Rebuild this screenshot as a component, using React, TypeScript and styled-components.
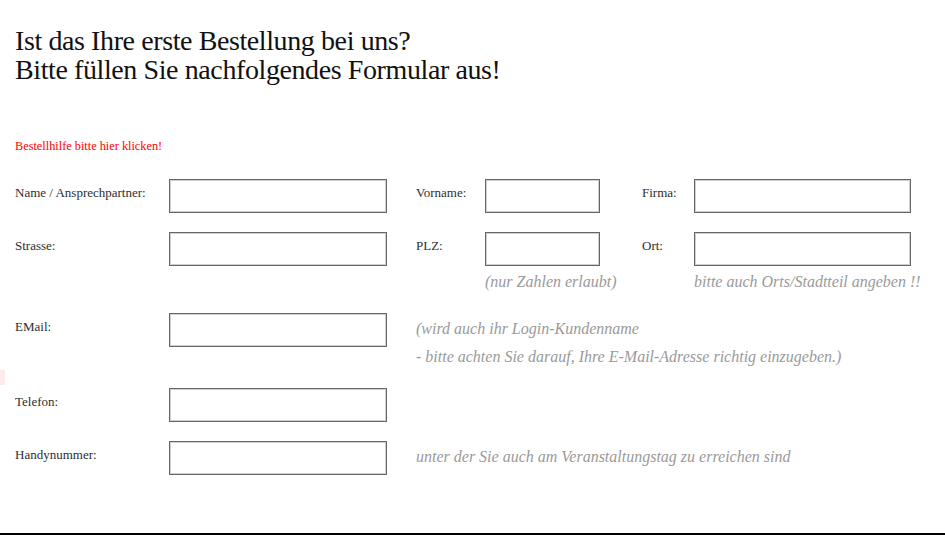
import React from "react";
import styled, { createGlobalStyle } from "styled-components";

const GlobalStyle = createGlobalStyle`
  html, body {
    margin: 0;
    padding: 0;
    background: #ffffff;
  }
  body {
    font-family: "Liberation Serif", "Times New Roman", serif;
    overflow: hidden;
  }
  * { box-sizing: border-box; }
`;

const Page = styled.div`
  position: relative;
  width: 945px;
  height: 535px;
  padding: 26px 15px 0 15px;
  border-bottom: 2px solid #000;
  overflow: hidden;
`;

const EdgeMark = styled.div`
  position: absolute;
  left: 0;
  top: 370px;
  width: 5px;
  height: 15px;
  background: #fdeaea;
`;

const Heading = styled.h1`
  margin: 0;
  font-family: "Liberation Serif", "Times New Roman", serif;
  font-weight: normal;
  font-size: 28px;
  line-height: 29px;
  letter-spacing: -0.4px;
  color: #111;
`;

const HelpLink = styled.a`
  display: block;
  margin-top: 55px;
  font-size: 12.3px;
  line-height: 14px;
  color: #ff0000;
  text-decoration: none;
  cursor: pointer;
`;

const Row = styled.div<{ $mt: number }>`
  display: grid;
  grid-template-columns: 154px 218px 29px 69px 115px 42px 52px 217px;
  align-items: start;
  margin-top: ${(p) => p.$mt}px;
`;

const Label = styled.label<{ $col: number }>`
  grid-column: ${(p) => p.$col};
  grid-row: 1;
  padding-top: 6px;
  font-size: 13px;
  line-height: 16px;
  color: #2e2e2e;
  white-space: nowrap;
`;

const Field = styled.input<{ $col: number }>`
  grid-column: ${(p) => p.$col};
  grid-row: 1;
  display: block;
  width: 100%;
  height: 34px;
  margin: 0;
  padding: 2px 4px;
  border: 1px solid #666;
  box-shadow: inset 0 0 0 1px #cfcfcf;
  background: #fff;
  font-family: "Liberation Serif", serif;
  font-size: 13px;
  outline: none;
`;

const Hint = styled.div<{ $col: number; $span?: number }>`
  grid-column: ${(p) => p.$col} / span ${(p) => p.$span ?? 1};
  grid-row: 1;
  padding-top: 2px;
  font-style: italic;
  font-size: 16px;
  line-height: 28px;
  color: #9a9a9a;
  white-space: nowrap;
`;

export default function App() {
  return (
    <>
      <GlobalStyle />
      <Page>
        <EdgeMark />
        <Heading>
          Ist das Ihre erste Bestellung bei uns?
          <br />
          Bitte füllen Sie nachfolgendes Formular aus!
        </Heading>
        <HelpLink>Bestellhilfe bitte hier klicken!</HelpLink>

        <Row $mt={26}>
          <Label $col={1}>Name / Ansprechpartner:</Label>
          <Field $col={2} />
          <Label $col={4}>Vorname:</Label>
          <Field $col={5} />
          <Label $col={7}>Firma:</Label>
          <Field $col={8} />
        </Row>

        <Row $mt={19}>
          <Label $col={1}>Strasse:</Label>
          <Field $col={2} />
          <Label $col={4}>PLZ:</Label>
          <Field $col={5} />
          <Label $col={7}>Ort:</Label>
          <Field $col={8} />
        </Row>

        <Row $mt={0}>
          <Hint $col={5} $span={2}>(nur Zahlen erlaubt)</Hint>
          <Hint $col={8}>bitte auch Orts/Stadtteil angeben !!</Hint>
        </Row>

        <Row $mt={17}>
          <Label $col={1}>EMail:</Label>
          <Field $col={2} />
          <Hint $col={4} $span={5}>
            (wird auch ihr Login-Kundenname
            <br />- bitte achten Sie darauf, Ihre E-Mail-Adresse richtig einzugeben.)
          </Hint>
        </Row>

        <Row $mt={17}>
          <Label $col={1}>Telefon:</Label>
          <Field $col={2} />
        </Row>

        <Row $mt={19}>
          <Label $col={1}>Handynummer:</Label>
          <Field $col={2} />
          <Hint $col={4} $span={5}>unter der Sie auch am Veranstaltungstag zu erreichen sind</Hint>
        </Row>
      </Page>
    </>
  );
}
